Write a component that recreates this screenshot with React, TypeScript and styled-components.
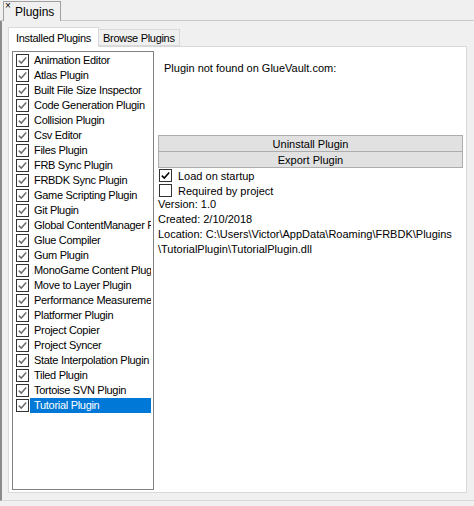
import styled, { createGlobalStyle } from 'styled-components'

const GlobalStyle = createGlobalStyle`
  html, body {
    margin: 0;
    padding: 0;
    background: #f0f0f0;
  }
  body {
    font-family: "Liberation Sans", Arial, sans-serif;
    font-size: 11px;
    color: #000;
  }
`

const plugins = [
  'Animation Editor',
  'Atlas Plugin',
  'Built File Size Inspector',
  'Code Generation Plugin',
  'Collision Plugin',
  'Csv Editor',
  'Files Plugin',
  'FRB Sync Plugin',
  'FRBDK Sync Plugin',
  'Game Scripting Plugin',
  'Git Plugin',
  'Global ContentManager Plugin',
  'Glue Compiler',
  'Gum Plugin',
  'MonoGame Content Plugin',
  'Move to Layer Plugin',
  'Performance Measurement Plugin',
  'Platformer Plugin',
  'Project Copier',
  'Project Syncer',
  'State Interpolation Plugin',
  'Tiled Plugin',
  'Tortoise SVN Plugin',
  'Tutorial Plugin',
]

const Window = styled.div`
  width: 474px;
  height: 506px;
  box-sizing: border-box;
  display: flex;
  flex-direction: column;
  background: #f0f0f0;
  overflow: hidden;
`

const DockStrip = styled.div`
  height: 20px;
  display: flex;
  align-items: flex-end;
  padding-left: 3px;
  border-bottom: 1px solid #c8c8c8;
`

const DockTab = styled.div`
  position: relative;
  height: 20px;
  box-sizing: border-box;
  padding: 0 6px 0 11px;
  display: flex;
  align-items: center;
  font-size: 12px;
  border: 1px solid #a0a0a0;
  border-bottom: none;
  background: #f0f0f0;
  margin-bottom: -1px;
`

const CloseMark = styled.span`
  position: absolute;
  left: 1px;
  top: -2px;
  font-size: 10px;
  line-height: 12px;
`

const DockBody = styled.div`
  flex: 1;
  display: flex;
  flex-direction: column;
  border-left: 2px solid #8a8a8a;
  border-bottom: 1px solid #d8d8d8;
  margin-bottom: 5px;
  padding: 6px 6px 7px 6px;
`

const TabHeaders = styled.div`
  display: flex;
  align-items: flex-end;
  height: 19px;
`

const TabHeader = styled.div<{ $active?: boolean }>`
  height: ${(p) => (p.$active ? 20 : 17)}px;
  box-sizing: border-box;
  padding: ${(p) => (p.$active ? '0 7px' : '0 4px')};
  display: flex;
  align-items: center;
  font-size: 11px;
  letter-spacing: -0.3px;
  background: ${(p) => (p.$active ? '#ffffff' : '#f0f0f0')};
  border: 1px solid #d9d9d9;
  border-bottom: ${(p) => (p.$active ? 'none' : '1px solid #d9d9d9')};
  margin-bottom: ${(p) => (p.$active ? -1 : 0)}px;
  position: relative;
  z-index: ${(p) => (p.$active ? 1 : 0)};
  & + & {
    margin-left: -1px;
  }
`

const TabPage = styled.div`
  flex: 1;
  display: flex;
  gap: 4px;
  background: #ffffff;
  border: 1px solid #d9d9d9;
  padding: 4px 3px 2px 3px;
  width: 459px;
  box-sizing: border-box;
`

const ListBox = styled.div`
  width: 142px;
  box-sizing: border-box;
  border: 1px solid #828282;
  background: #fff;
  padding: 1px 2px;
  overflow: hidden;
`

const ListRow = styled.div`
  height: 15px;
  display: flex;
  align-items: center;
  white-space: nowrap;
`

const ListCheck = styled.span`
  width: 13px;
  height: 13px;
  box-sizing: border-box;
  border: 1px solid #333;
  flex: none;
  margin-left: 1px;
  display: flex;
  align-items: center;
  justify-content: center;
`

const ListLabel = styled.span<{ $selected?: boolean }>`
  flex: 1;
  height: 15px;
  line-height: 15px;
  margin-left: 1px;
  padding-left: 4px;
  overflow: hidden;
  letter-spacing: -0.3px;
  background: ${(p) => (p.$selected ? '#0078d7' : 'transparent')};
  color: ${(p) => (p.$selected ? '#fff' : '#000')};
`

const Details = styled.div`
  flex: 1;
  display: flex;
  flex-direction: column;
`

const Notice = styled.div`
  padding: 10px 0 0 6px;
  height: 74px;
  line-height: 15px;
`

const PushButton = styled.div`
  height: 17px;
  box-sizing: border-box;
  border: 1px solid #adadad;
  background: #e1e1e1;
  display: flex;
  align-items: center;
  justify-content: center;
  & + & {
    margin-top: -1px;
  }
`

const CheckRow = styled.div`
  height: 15px;
  display: flex;
  align-items: center;
  gap: 6px;
  padding-left: 1px;
`

const Box = styled.span`
  width: 13px;
  height: 13px;
  box-sizing: border-box;
  border: 1px solid #333;
  background: #fff;
  display: flex;
  align-items: center;
  justify-content: center;
`

const InfoLine = styled.div`
  line-height: 15px;
  white-space: nowrap;
`

const InfoBlock = styled.div`
  margin-top: -1px;
`

const Tick = ({ color }: { color: string }) => (
  <svg width="9" height="9" viewBox="0 0 9 9">
    <path d="M0.8 4.6 L3.3 7.1 L8.2 1.4" fill="none" stroke={color} strokeWidth="1.5" />
  </svg>
)

export default function App() {
  return (
    <>
      <GlobalStyle />
      <Window>
        <DockStrip>
          <DockTab>
            <CloseMark>×</CloseMark>
            Plugins
          </DockTab>
        </DockStrip>
        <DockBody>
          <TabHeaders>
            <TabHeader $active>Installed Plugins</TabHeader>
            <TabHeader>Browse Plugins</TabHeader>
          </TabHeaders>
          <TabPage>
            <ListBox>
              {plugins.map((name, i) => (
                <ListRow key={name}>
                  <ListCheck>
                    <Tick color="#6e6e6e" />
                  </ListCheck>
                  <ListLabel $selected={i === plugins.length - 1}>{name}</ListLabel>
                </ListRow>
              ))}
            </ListBox>
            <Details>
              <Notice>Plugin not found on GlueVault.com:</Notice>
              <PushButton>Uninstall Plugin</PushButton>
              <PushButton>Export Plugin</PushButton>
              <CheckRow>
                <Box>
                  <Tick color="#000" />
                </Box>
                Load on startup
              </CheckRow>
              <CheckRow>
                <Box />
                Required by project
              </CheckRow>
              <InfoBlock>
                <InfoLine>Version: 1.0</InfoLine>
                <InfoLine>Created: 2/10/2018</InfoLine>
                <InfoLine>Location: C:\Users\Victor\AppData\Roaming\FRBDK\Plugins</InfoLine>
                <InfoLine>\TutorialPlugin\TutorialPlugin.dll</InfoLine>
              </InfoBlock>
            </Details>
          </TabPage>
        </DockBody>
      </Window>
    </>
  )
}
